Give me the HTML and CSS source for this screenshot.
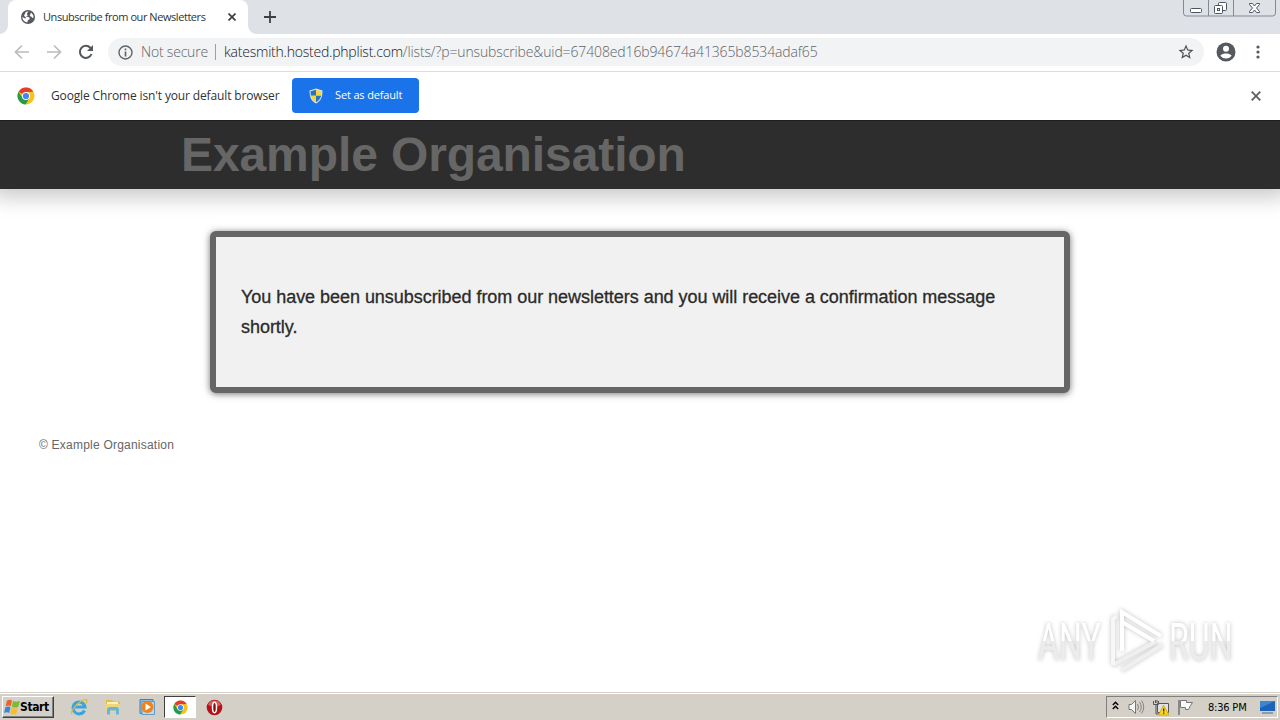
FILE: index.html
```html
<!DOCTYPE html>
<html lang="en">
<head>
    <meta charset="UTF-8">
    <meta name="viewport" content="width=device-width, initial-scale=1.0">
    <title>Unsubscribe from our Newsletters</title>
    <link rel="stylesheet" href="styles.css">
</head>
<body>
    <svg class="defs" width="0" height="0">
        <symbol id="chrome" viewBox="0 0 18 18">
            <circle cx="9" cy="9" r="8.5" fill="#fbc116"/>
            <path d="M9 9 1.6 4.8A8.5 8.5 0 0 1 16.4 4.8L9 5z" fill="#e33b2e"/>
            <path d="M1.6 4.8A8.5 8.5 0 0 0 8.6 17.5L12.5 11 9 9 5.5 11z" fill="#269b4c"/>
            <circle cx="9" cy="9" r="4" fill="#fff"/>
            <circle cx="9" cy="9" r="3.1" fill="#4285f4"/>
        </symbol>
    </svg>

    <div class="tabstrip">
        <div class="tab">
            <svg class="globe" width="14" height="14" viewBox="0 0 14 14">
                <circle cx="7" cy="7" r="7" fill="#55595e"/>
                <path d="M7.5 1.3 5.8 3.8l1 1.6-2 1.2 3.4.6.6 2-2 1-.4 2.2C3 12 1.2 9.500 1.300 7l3 1.600.8-.8L3 5.800 4.800 2z" fill="#fff"/>
                <path d="M10 2.500l2 2.200.7 2.600-1.500.7-1-1.500-1.500-.5z" fill="#fff"/>
            </svg>
            <span class="tab-title">Unsubscribe from our Newsletters</span>
            <svg class="tab-close" width="8" height="8" viewBox="0 0 8 8"><path d="M.5.5l7 7M7.5.5l-7 7" stroke="#3c4043" stroke-width="1.7"/></svg>
        </div>
        <svg class="new-tab" width="12" height="12" viewBox="0 0 12 12"><path d="M6 0v12M0 6h12" stroke="#3c4043" stroke-width="1.8"/></svg>
        <div class="window-buttons">
            <svg width="98" height="18" viewBox="0 0 98 18" fill="none">
                <path d="M1.5 0v13a3 3 0 0 0 3 3h86a3 3 0 0 0 3-3V0M26.5 0v16M51.5 0v16" stroke="#858992"/>
                <rect x="8.5" y="8.5" width="11" height="4" rx="1" fill="#fff" stroke="#4d5564"/>
                <rect x="36.5" y="2.5" width="8" height="8" rx="1" fill="#fff" stroke="#4d5564"/>
                <rect x="32.5" y="5.5" width="8" height="8" rx="1" fill="#fff" stroke="#4d5564"/>
                <rect x="35.5" y="8.5" width="2" height="2" stroke="#4d5564"/>
                <path d="M67.5 3.5h3l2 2.5 2-2.5h3v1l-3 3.5 3 3.5v1h-3l-2-2.5-2 2.5h-3v-1l3-3.5-3-3.5z" fill="#fff" stroke="#4d5564"/>
            </svg>
        </div>
    </div>

    <div class="toolbar">
        <svg class="nav-icon" width="16" height="16" viewBox="0 0 16 16" fill="none" stroke="#babcbe" stroke-width="1.7"><path d="M15 8H2M8 1.5 1.5 8 8 14.5"/></svg>
        <svg class="nav-icon" width="16" height="16" viewBox="0 0 16 16" fill="none" stroke="#babcbe" stroke-width="1.7"><path d="M1 8h13M8 1.5 14.5 8 8 14.5"/></svg>
        <svg class="nav-icon" width="16" height="16" viewBox="0 0 16 16" fill="none"><path d="M13.5 10A6 6 0 1 1 12.3 3.8L14 5.5" stroke="#55595d" stroke-width="2"/><path d="M15 1v6H9z" fill="#55595d"/></svg>
        <div class="omnibox">
            <svg width="15" height="15" viewBox="0 0 15 15"><circle cx="7.5" cy="7.5" r="6.5" fill="none" stroke="#5f6368" stroke-width="1.4"/><path d="M7.5 3.5v1.8M7.5 6.5v5" stroke="#5f6368" stroke-width="1.6"/></svg>
            <span class="not-secure">Not secure</span>
            <span class="divider"></span>
            <span class="url"><span class="host">katesmith.hosted.phplist.com</span><span class="path">/lists/?p=unsubscribe&amp;uid=67408ed16b94674a41365b8534adaf65</span></span>
            <svg class="star" width="18" height="18" viewBox="0 0 24 24"><path d="M22 9.24l-7.19-.62L12 2 9.19 8.63 2 9.24l5.46 4.73L5.82 21 12 17.27 18.18 21l-1.63-7.03L22 9.24zM12 15.4l-3.76 2.27 1-4.28-3.32-2.88 4.38-.38L12 6.1l1.71 4.04 4.38.38-3.32 2.88 1 4.28L12 15.4z" fill="#4d5156"/></svg>
        </div>
        <svg class="avatar" width="20" height="20" viewBox="0 0 20 20"><circle cx="10" cy="10" r="9.5" fill="#55595e"/><circle cx="10" cy="6.8" r="3" fill="#fff"/><path d="M4.3 13.8C5.3 12 8 11.5 10 11.5s4.7.5 5.7 2.3A6.8 6.8 0 0 1 10 16.5a6.8 6.8 0 0 1-5.7-2.7z" fill="#fff"/></svg>
        <svg class="menu" width="4" height="14" viewBox="0 0 4 14" fill="#55595e"><circle cx="2" cy="2" r="1.6"/><circle cx="2" cy="7" r="1.6"/><circle cx="2" cy="12" r="1.6"/></svg>
    </div>

    <div class="infobar">
        <svg width="18" height="18"><use href="#chrome"/></svg>
        <span class="infobar-text">Google Chrome isn't your default browser</span>
        <button class="btn-default">
            <svg width="14" height="16" viewBox="0 0 14 16">
                <path d="M7 .5 13.5 2.5C13.5 9 12 13 7 15.5 2 13 .5 9 .5 2.5z" fill="#d8e3ee"/>
                <path d="M7 1.8v6H1.9C1.7 6.5 1.6 5 1.6 3.3z" fill="#2873bd"/>
                <path d="M7 1.8v6h5.1c.2-1.3.3-2.8.3-4.5z" fill="#f5d63c"/>
                <path d="M7 7.8v6.4C4.3 12.7 2.5 10.5 1.9 7.8z" fill="#f5d63c"/>
                <path d="M7 7.8v6.4c2.7-1.5 4.5-3.7 5.1-6.4z" fill="#2873bd"/>
            </svg>
            <span>Set as default</span>
        </button>
        <svg class="infobar-close" width="10" height="10" viewBox="0 0 10 10"><path d="M.7.7l8.6 8.6M9.3.7.7 9.3" stroke="#5f6368" stroke-width="1.9"/></svg>
    </div>

    <div class="page">
        <div class="header">
            <h1>Example Organisation</h1>
        </div>
        <div class="content">
            <h3>You have been unsubscribed from our newsletters and you will receive a confirmation message shortly.</h3>
        </div>
        <div class="footer">© Example Organisation</div>

        <div class="watermark">
            <span class="wm-word">ANY</span>
            <svg width="60" height="68" viewBox="0 0 60 68" fill="none">
                <path d="M47 35 5 58M54 38 14 63" stroke="#efefef" stroke-width="4"/>
                <path d="M5 58V12l4-3" stroke="#f7f7f7" stroke-width="4"/>
                <path d="M14 44V5l39 24M14 15l32 19" stroke="#fff" stroke-width="4"/>
            </svg>
            <span class="wm-word">RUN</span>
        </div>
    </div>

    <div class="taskbar">
        <button class="start">
            <svg width="16" height="16" viewBox="0 0 16 16">
                <path d="M3 1.5Q6-.2 8 1.5L6.8 7.300Q4.500 5.800 1.600 7.300z" fill="#e8642c"/>
                <path d="M9 2q3 1.500 7 0l-1.800 6q-3 1.300-6.300-.3z" fill="#7db83a"/>
                <path d="M1.400 8.300q2.800-1.500 5.100 0L5.200 14Q3 12.700 0 14z" fill="#3d86cf"/>
                <path d="M7.600 8.800q2.800 1.400 6.300.2L12.200 15q-3 1.300-6-.3z" fill="#f5bf2b"/>
            </svg>
            <span>Start</span>
        </button>
        <div class="launch">
            <svg width="18" height="18" viewBox="0 0 18 18" fill="none">
                <path d="M14.5 12.5A6 6 0 1 1 15 9H5" stroke="#39a5df" stroke-width="3"/>
                <path d="M2 16C-1 13 12 0 16.5 1.8c1 .5.5 2-.5 3.5" stroke="#e4b83c" stroke-width="1.3"/>
            </svg>
        </div>
        <div class="launch">
            <svg width="18" height="18" viewBox="0 0 18 18">
                <path d="M2 2h6l1 1.5h7V13H2z" fill="#e3bd4c"/>
                <path d="M3 4h11v3H3z" fill="#fff3b6"/>
                <path d="M2 6h14v8H2z" fill="#f0d67a"/>
                <path d="M3 16.5v-5q0-2.500 2.500-2.500h7q2.500 0 2.500 2.500v5h-3v-4H6v4z" fill="#67b5d9"/>
            </svg>
        </div>
        <div class="launch">
            <svg width="18" height="18" viewBox="0 0 18 18">
                <path d="M2 1.5h13v14H2z" fill="#8bbce1" stroke="#3b83bd"/>
                <path d="M4 3.5h12.500v13H4z" fill="#b9d9ee" stroke="#5c9bcb"/>
                <circle cx="9.500" cy="9" r="6" fill="#f28218"/>
                <path d="M7.500 5.500 13 9 7.500 12.500z" fill="#fff"/>
            </svg>
        </div>
        <div class="launch active">
            <svg width="15" height="15"><use href="#chrome"/></svg>
        </div>
        <div class="launch">
            <svg width="17" height="17" viewBox="0 0 17 17"><circle cx="8.5" cy="8.5" r="7.8" fill="#b51217"/><path d="M2 6a7 7 0 0 1 13 0q-6 3-13 0z" fill="#d95d5d"/><ellipse cx="8.5" cy="8.5" rx="2" ry="5.2" fill="#8b0c10" stroke="#fff" stroke-width="1.5"/></svg>
        </div>
        <div class="tray">
            <svg class="chevrons" width="7" height="9" viewBox="0 0 7 9" fill="none" stroke="#000" stroke-width="1.4"><path d="M.8 4 3.5 1.2 6.2 4M.8 8 3.5 5.2 6.2 8"/></svg>
            <svg width="17" height="16" viewBox="0 0 17 16" fill="none"><path d="M1 5.5h2.5l4-4v13l-4-4H1z" fill="#f6f6f6" stroke="#777"/><path d="M9.5 5q2 3 0 6M11.5 3q3.5 5 0 10M13.5 1.5q4.5 6.5 0 13" stroke="#858585"/></svg>
            <svg width="18" height="17" viewBox="0 0 18 17"><path d="M5.500 4.500h11v9h-11z" fill="#dfe3e8" stroke="#555"/><path d="M1.500 2v3.500h5V2M4 5.500V15h4M3.500 1v3M5 1v3" fill="none" stroke="#555"/><path d="M11.5 6 17 16H6.5z" fill="#ffd51e" stroke="#c49a10" stroke-width=".7"/><path d="M11.7 9.5v3M11.7 13.5v1.2" stroke="#222" stroke-width="1.3"/></svg>
            <svg width="17" height="16" viewBox="0 0 17 16"><path d="M2 1v15" stroke="#888" stroke-width="2"/><path d="M3.500 1.500h6v2h6l-2 3-2 4h-3v-2h-5z" fill="#f9f9f9" stroke="#777"/></svg>
            <span class="clock">8:36 PM</span>
            <svg class="desktop" width="17" height="14" viewBox="0 0 17 14"><path d="M1 1h15v10H1z" fill="#1d63b7"/><path d="M1 1h15L1 8z" fill="#3b87d6"/><path d="M3 13h11" stroke="#6f8ba6" stroke-width="1.5"/></svg>
        </div>
    </div>
</body>
</html>
```
FILE: styles.css
```css
* {
    margin: 0;
    padding: 0;
    box-sizing: border-box;
}

body {
    display: flex;
    flex-direction: column;
    height: 720px;
    overflow: hidden;
    background: #fff;
    font-family: "Open Sans", sans-serif;
}

.defs {
    position: absolute;
}

svg {
    flex: none;
}

/* browser */
.tabstrip {
    display: flex;
    flex: none;
    height: 34px;
    padding-left: 8px;
    background: #dee1e6;
}

.tab {
    position: relative;
    display: flex;
    align-items: center;
    width: 240px;
    height: 34px;
    padding: 0 12px 0 13px;
    background: #fff;
    border-radius: 8px 8px 0 0;
}

/* curved feet of the tab */
.tab::before,
.tab::after {
    content: "";
    position: absolute;
    bottom: 0;
    width: 8px;
    height: 8px;
}

.tab::before {
    left: -8px;
    background: radial-gradient(circle at 0 0, transparent 7.5px, #fff 8px);
}

.tab::after {
    right: -8px;
    background: radial-gradient(circle at 100% 0, transparent 7.5px, #fff 8px);
}

.tab-title {
    margin-left: 8px;
    padding-bottom: 1px;
    font-size: 11px;
    letter-spacing: -0.44px;
    color: #303336;
    white-space: nowrap;
}

.tab-close {
    margin-left: auto;
}

.new-tab {
    margin: 11px 0 0 16px;
}

.window-buttons {
    margin-left: auto;
}

.toolbar {
    display: flex;
    flex: none;
    align-items: center;
    height: 38px;
    padding: 0 20px 1px 14px;
    border-bottom: 1px solid #dadce0;
}

.nav-icon {
    margin-right: 16px;
}

.omnibox {
    display: flex;
    flex: 1;
    align-items: center;
    height: 28px;
    margin-right: 12px;
    margin-left: -2px;
    padding: 0 9px 0 10px;
    background: #f1f3f4;
    border-radius: 14px;
    font-size: 14px;
    font-weight: 300;
    white-space: nowrap;
}

.not-secure {
    width: 67px;
    margin-left: 8px;
    padding-bottom: 1px;
    letter-spacing: -0.2px;
    color: #5f6368;
}

.divider {
    width: 1px;
    height: 16px;
    margin: 0 8px 0 7px;
    background: #9aa0a6;
}

.url {
    padding-bottom: 1px;
}

.host {
    letter-spacing: -0.22px;
    color: #17191c;
}

.path {
    letter-spacing: -0.13px;
    color: #5f6368;
}

.star {
    margin-left: auto;
}

.menu {
    margin-left: 20px;
}

.infobar {
    position: relative;
    z-index: 1;
    display: flex;
    flex: none;
    align-items: center;
    height: 48px;
    padding: 0 19px 0 17px;
    background: #fff;
}

.infobar-text {
    width: 241px;
    margin-left: 16px;
    padding-bottom: 1px;
    font-size: 12px;
    letter-spacing: -0.14px;
    color: #303336;
    white-space: nowrap;
}

.btn-default {
    display: flex;
    align-items: center;
    width: 127px;
    height: 35px;
    margin-bottom: 1px;
    padding-left: 17px;
    border: none;
    border-radius: 4px;
    background: #1a73e8;
    color: #fff;
    font-family: inherit;
    font-size: 11px;
    letter-spacing: -0.15px;
    white-space: nowrap;
}

.btn-default span {
    margin-left: 12px;
    padding-bottom: 2px;
}

.infobar-close {
    margin-left: auto;
}

/* page */
.page {
    position: relative;
    flex: 1;
    font-family: "Liberation Sans", Arial, sans-serif;
}

.header {
    height: 69px;
    padding-left: 181px;
    background: #2d2d2d;
    border-top: 1px solid #1e1e1e;
    box-shadow: 0 0 20px 8px rgba(0, 0, 0, 0.22);
}

h1 {
    font-size: 48px;
    line-height: 68px;
    letter-spacing: -0.1px;
    color: #666;
}

.content {
    width: 860px;
    height: 162px;
    margin: 42px auto 0;
    padding: 45px 25px;
    background: #f1f1f1;
    border: 6px solid #666;
    border-radius: 6px;
    box-shadow: 0 1px 7px rgba(0, 0, 0, 0.55);
}

h3 {
    font-size: 18px;
    font-weight: normal;
    line-height: 30px;
    letter-spacing: -0.04px;
    color: #2a2a2a;
    -webkit-text-stroke: 0.3px #2a2a2a;
}

.footer {
    margin: 44px 0 0 39px;
    font-size: 12px;
    line-height: 16px;
    letter-spacing: 0.22px;
    color: #666;
}

.watermark {
    position: absolute;
    right: 48px;
    bottom: 17px;
    display: grid;
    grid-template-columns: 70px 61px 63px;
    align-items: center;
    width: 194px;
    height: 68px;
    filter: drop-shadow(0 0 2px rgba(0, 0, 0, 0.25));
}

.wm-word {
    justify-self: start;
    width: 104px;
    margin-top: 4px;
    font-family: Roboto, sans-serif;
    font-size: 51px;
    line-height: 64px;
    color: transparent;
    background: linear-gradient(#fff 47%, #ececec 47%);
    background-clip: text;
    -webkit-background-clip: text;
    transform: scaleX(0.63);
    transform-origin: left;
}

/* taskbar */
.taskbar {
    display: flex;
    flex: none;
    align-items: center;
    height: 28px;
    padding: 1px 2px 0;
    background: #d4d0c8;
    border-top: 1px solid #d4d0c8;
    box-shadow: inset 0 1px #fff;
}

.start {
    display: flex;
    align-items: center;
    width: 52px;
    height: 22px;
    margin-right: 9px;
    padding-left: 1px;
    border: 1px solid;
    border-color: #fff #404040 #404040 #fff;
    box-shadow: inset -1px -1px #808080;
    background: #d4d0c8;
    color: #000;
    font-family: "DejaVu Sans Condensed", "DejaVu Sans", sans-serif;
    font-size: 12px;
    font-weight: bold;
    letter-spacing: -0.4px;
}

.launch {
    display: flex;
    align-items: center;
    justify-content: center;
    width: 32px;
    height: 22px;
    margin-right: 1.8px;
}

.launch.active {
    background: #fff;
    border: 1px solid;
    border-color: #404040 #fff #fff #404040;
}

.tray {
    display: flex;
    align-items: center;
    gap: 7px;
    width: 172px;
    height: 22px;
    margin-left: auto;
    padding-left: 5px;
    border: 1px solid;
    border-color: #808080 #fff #fff #808080;
}

.chevrons {
    margin: 0 2px 3px 0;
}

.clock {
    width: 44px;
    margin-left: 7px;
    font-family: "DejaVu Sans Condensed", "DejaVu Sans", sans-serif;
    font-size: 11px;
    letter-spacing: -0.2px;
    color: #000;
    white-space: nowrap;
}
```
